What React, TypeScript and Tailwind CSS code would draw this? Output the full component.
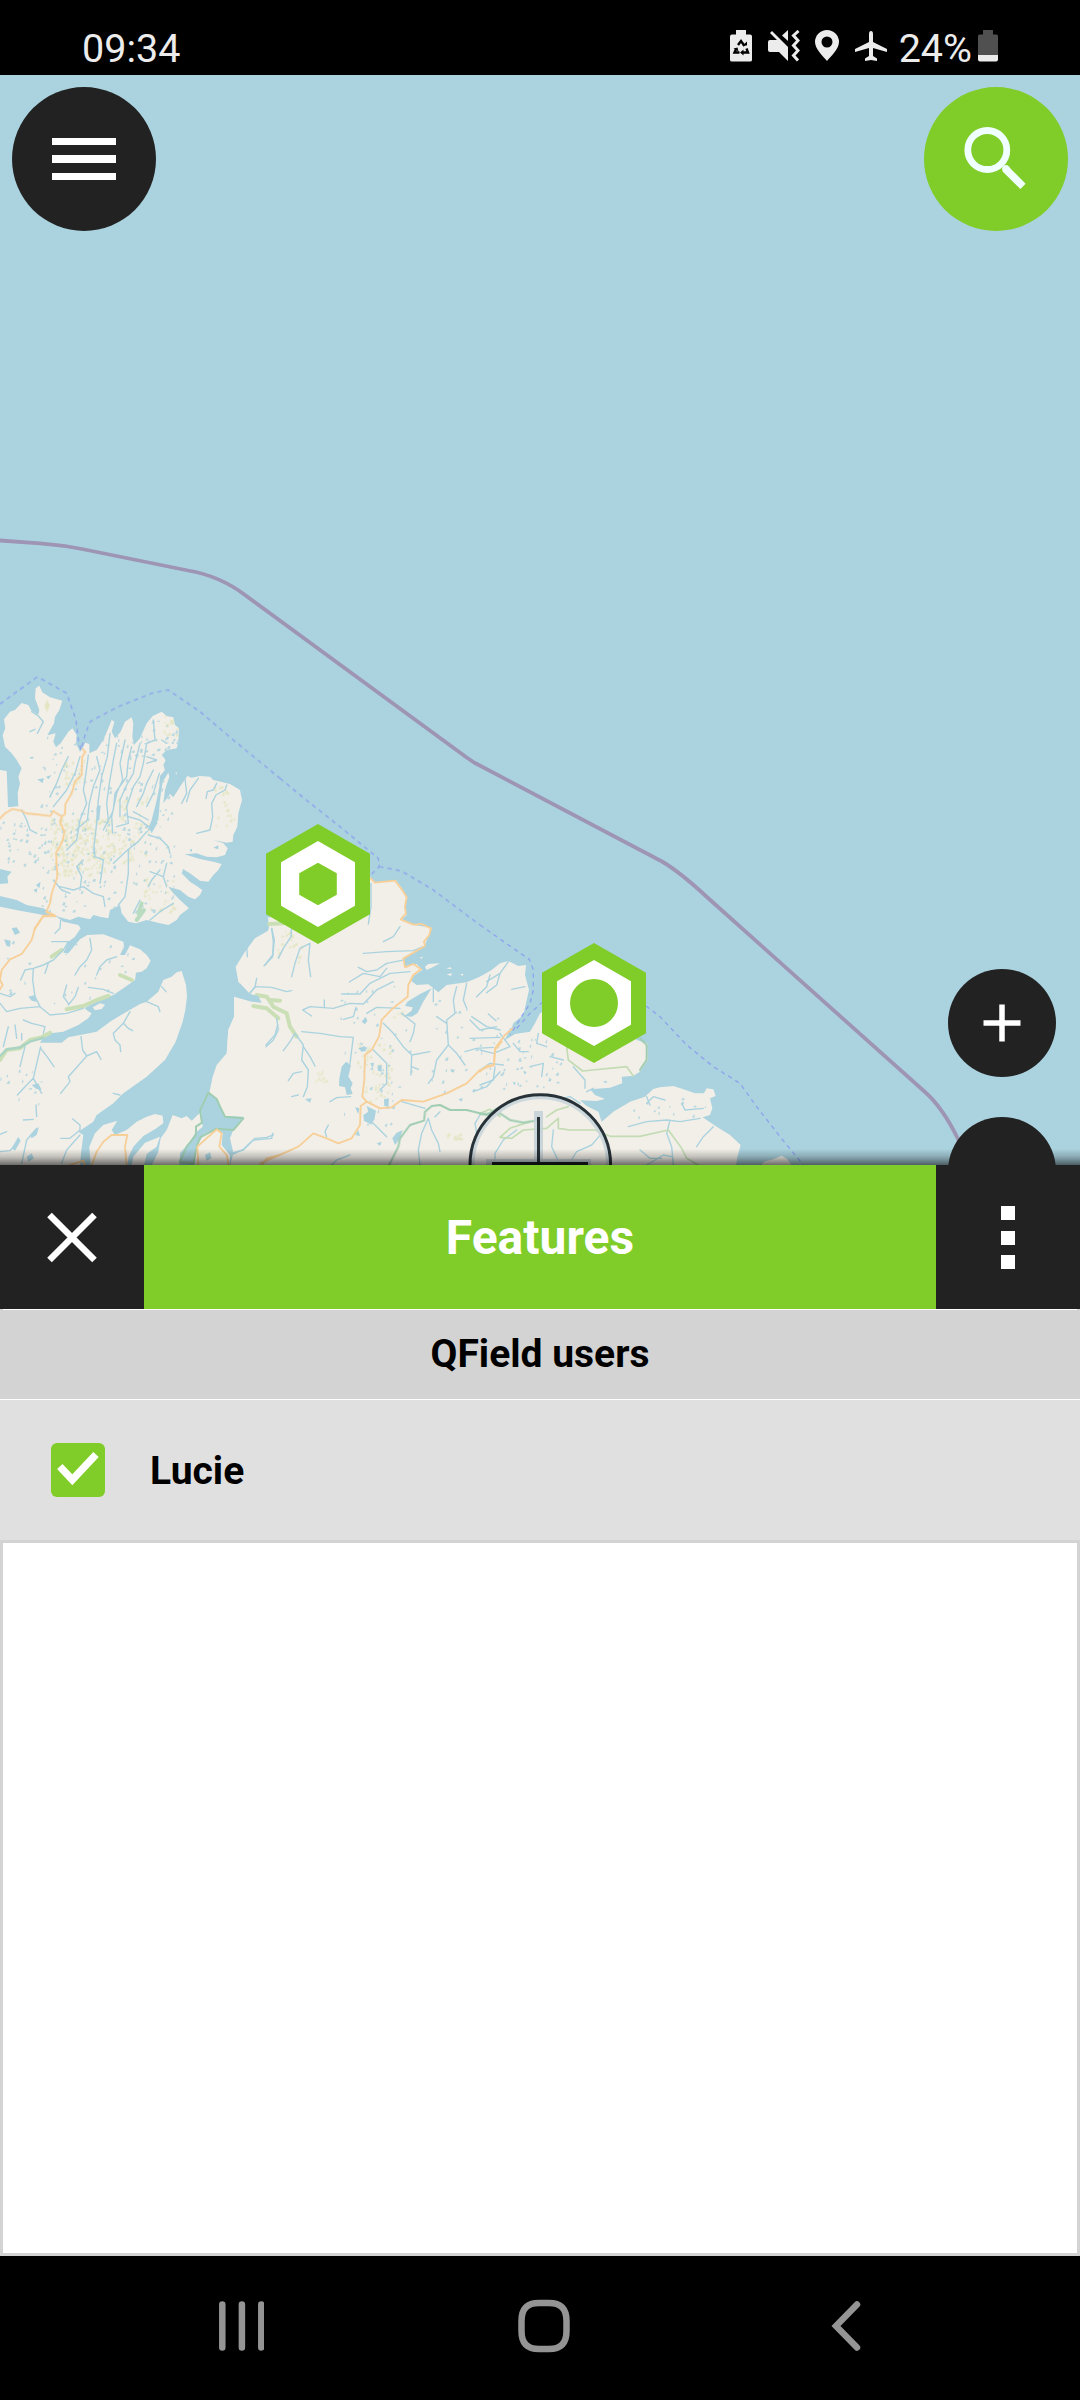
import React from "react";

const LAND = "#f2efe8";
const WATER = "#abd3df";

// Each tile holds a stretch of the coast in its own 3x coordinates.
const TILE_NW = "translate(0 660) scale(.33333)";
const TILE_SW = "translate(0 900) scale(.33333)";
const TILE_MID = "translate(220 800) scale(.33333)";
const TILE_EAST = "translate(480 900) scale(.33333)";

const nwCoast =
  "M0 330L20 333 22 380 24 442 55 440 53 400 60 370 55 350 65 325 50 300 35 280 15 260 8 225 16 205 12 178 30 155 45 150 65 129 85 135 95 153 115 165 118 150 105 115 107 85 118 77 127 97 150 112 187 122 178 150 165 170 162 190 142 226 167 220 160 245 168 262 182 250 205 215 217 205 230 225 228 250 240 276 256 248 268 252 268 280 290 270 310 240 325 205 335 180 343 185 335 215 345 235 362 215 375 185 395 172 400 190 397 230 402 255 420 235 440 190 458 168 485 155 500 168 520 172 525 195 537 205 535 245 530 265 500 270 485 285 497 300 490 315 495 330 480 348 478 380 468 430 455 480 440 520 475 480 480 420 488 365 505 338 508 350 495 390 490 430 510 402 520 412 540 380 562 348 575 353 600 348 630 350 640 360 690 372 720 390 726 420 715 460 712 500 700 525 698 545 680 548 640 540 670 550 683 565 675 585 650 592 620 590 590 580 553 583 600 597 640 605 665 612 655 630 640 645 625 665 600 662 570 640 550 628 545 640 570 665 590 678 607 690 600 705 585 718 565 710 540 690 505 680 520 700 540 720 567 745 540 765 530 780 505 795 480 790 440 780 408 790 385 785 365 760 360 735 350 740 330 750 325 775 300 770 280 765 270 778 235 770 210 780 175 770 165 765 130 745 80 735 50 720 0 708V672L25 670 22 650 35 635 0 627Z";

const swCoast =
  "M0 20L60 32 130 45 170 50 190 65 235 75 242 85 225 110 205 125 190 158 205 160 240 118 262 105 310 103 370 125 372 140 360 165 375 165 390 136 420 148 440 165 452 182 440 205 425 215 408 218 405 240 370 265 340 285 300 300 260 320 262 332 275 340 265 355 235 375 190 395 150 400 128 415 120 428 185 428 205 412 240 405 290 395 330 365 380 335 420 312 440 305 475 275 490 240 515 230 530 217 545 213 558 255 561 290 556 330 548 365 527 425 495 480 440 530 370 580 340 610 290 645 280 665 235 695 250 705 243 760 240 797H0Z";

const swIslands = [
  "M278 322L300 310 315 314 305 327 285 331Z",
  "M272 797L268 740 285 700 310 675 352 662 335 690 345 705 380 690 410 665 440 650 465 642 488 647 490 670 465 688 430 708 400 740 386 770 382 797Z",
  "M395 797L400 770 435 728 480 710 470 740 440 762 432 797Z",
  "M455 797L475 755 482 715 500 690 518 645 545 655 560 648 575 662 603 635 608 680 585 700 570 725 540 760 538 797Z",
  "M840 75L803 50 808 72 805 92 770 120 740 150 735 175 710 200 715 235 740 270 760 285 790 298 830 340H860V75Z",
  "M702 290L720 296 752 312 840 340 870 797H690L700 760 697 745 690 715 700 690 730 650 675 648 665 625 650 595 628 578 638 530 650 495 680 460 685 390 703 350Z",
  "M583 797L590 740 612 702 650 686 668 700 665 735 690 765 690 797Z",
];

const midCoast =
  "M150 350L145 365 148 390 105 415 75 455 47 500 55 545 80 575 95 585 42 590 42 650 25 690 20 765 0 790 70 840 180 900V1100H840V495L800 522 740 547 680 555 655 577 635 560 625 553 590 555 570 540 580 528 607 510 590 492 555 499 552 475 600 448 612 440 625 410 635 383 582 375 545 358 560 345 553 320 560 290 545 265 528 240 465 248 452 232 400 250 250 300Z";

const eastCoast =
  "M-20 240L0 230 35 210 60 190 85 183 115 198 138 195 135 225 147 270 138 310 130 345 100 370 90 400 72 422 105 402 150 395 165 370 180 340 250 300H340L470 420 502 430 504 480 480 515 460 527 425 530 427 550 390 563 330 568 345 585 375 597 350 603 300 601 320 618 355 635 365 665 400 635 450 605 495 590 520 567 540 562 580 558 610 568 645 580 672 580 680 565 700 568 707 588 690 595 697 625 690 645 668 652 710 680 750 705 782 735 772 770 768 797H-20Z";

// Inland water that is wide enough to read as an area.
const lakes: [string, string[]][] = [
  [TILE_SW, [
    "M35 85L50 82 60 98 45 105Z", "M12 118L32 122 30 140 20 138Z", "M85 290L105 285 110 305 95 302Z", "M95 555L115 550 125 570 108 566Z",
    "M258 320L275 325 270 332 255 328Z", "M90 705L117 680 110 705 95 715Z", "M35 745L55 710 62 722 45 752Z", "M80 770L95 760 102 775 85 785Z",
    "M615 765L630 757 635 775 620 782Z", "M565 777L585 725 582 760 572 785Z",
  ]],
  [TILE_MID, [
    "M365 800L378 785 393 795 385 830 398 850 392 865 398 882 380 885 375 862 357 858 358 835Z", "M425 665L437 650 442 662 435 673Z",
    "M430 945L445 935 440 918 468 932 463 960 450 972 432 962Z", "M492 898L507 895 505 920 493 918Z", "M405 922L418 925 415 942Z",
    "M517 1015L530 998 548 990 540 1015 525 1035Z", "M555 618L562 605 600 582 635 565 610 605 592 640 575 650 553 648 575 632 578 622Z",
    "M472 797L485 795 485 815 474 812Z", "M406 1005L415 990 420 1008Z", "M415 745L435 738 438 752 425 755Z", "M690 812L705 808 700 818Z",
    "M470 1030L485 1025 480 1038Z", "M715 897L728 895 725 905Z", "M255 897L275 895 270 908Z", "M451 790L462 788 458 805Z",
  ]],
  [TILE_NW, [
    "M100 690L112 685 110 698ZM108 675L122 665 118 685Z", "M112 358L132 355 128 370Z", "M138 350L155 345 145 358Z", "M445 500L468 470 472 490 455 520Z",
    "M88 292L102 290 96 298Z", "M290 440L302 435 298 480 290 485Z", "M640 563L655 556 655 568Z", "M568 570L576 566 576 576Z",
  ]],
  [TILE_EAST, ["M368 545L380 542 380 550Z", "M75 420L100 395 110 378 90 385Z", "M205 540L215 537 210 546Z", "M130 512L140 516 134 524Z", "M98 545L108 548 103 556Z"]],
];

const rivers: [string, string][] = [
  [TILE_NW,
    "M95 155L115 168 130 185 112 220M90 215L105 208M205 290L185 330 170 370 150 410M240 290L225 340 200 390 160 440M265 285L258 340 250 390 260 430 240 480 230 540 200 570M290 290L300 330 280 380 268 430 262 480 228 510M330 220L322 290 305 350 295 420 290 490 282 560 285 590M350 250L340 300 328 370 320 430 325 480 310 510M375 240L360 310 368 360 350 400 335 470 338 520M395 260L385 300 380 350 345 400 340 450 322 490M420 250L405 310 400 340 380 375 360 420 360 470M460 180L465 240 440 250 430 310 420 350 400 380 380 440 385 490 350 500M485 240L500 250M440 290L470 300 440 310M460 330L440 370 430 400 410 440M478 340L460 400 440 440M440 515L415 545 385 568 385 640 375 710 355 735M385 568L340 610M445 525L480 535 505 560 510 580M385 470L420 480 445 500M400 455L445 480M555 355L560 400 545 430M595 355L570 390 560 425M680 375L675 390 648 405 635 430 638 470 630 510 590 520M650 370L640 390 622 395 618 415M500 610L490 650 450 635M490 650L500 680M480 630L455 660 445 680M550 630L565 650M285 590L310 600 305 640 300 670M180 680L220 690 250 680 280 700 310 710 315 740M250 600L230 620 245 650 240 690M160 660L185 690 210 700M65 450L80 480 90 510 110 520M520 730L480 755 450 780M400 760L420 720"],
  [TILE_SW,
    "M182 60L180 85 165 100M155 125H205L190 150 160 180 130 195 100 205 75 210 62 240M100 205L98 240 105 290 120 320M145 190L135 220M270 115L275 150 260 180 240 200 225 225M350 170L320 180 300 200 290 225M0 280L30 290 45 280M0 310L20 335 60 325 120 320 150 345 200 340 250 325M200 255L190 290 205 310M235 262L225 290 205 315M265 262L310 268 340 280M25 380L15 420 10 440M45 375L50 415M70 360L95 370 135 380 130 400M65 400V420M75 440L60 500M122 440L108 500 100 535 75 560 52 585M122 445L145 475 162 500M100 535L125 580M243 410L248 450 260 468 245 485 205 530 210 545 182 580M260 468L290 455 303 478M390 335L370 370 340 400 345 420 360 435 362 455M370 370L385 385 398 392M440 305L475 320 480 335M485 260L498 275M340 580L360 585M218 657L240 675V690L210 715H182M108 615L110 650M70 660L100 658M0 703L20 695M0 755L30 752 45 735M110 685L80 720 65 790M240 705L200 750 185 790M815 85L823 120 818 170 792 197M770 235L765 262 750 278M833 375L825 405 798 435M700 762L730 748 765 715 800 712 820 705"],
  [TILE_MID,
    "M155 385L160 425 158 465 135 495M215 380L213 410 190 445 175 475M270 430L240 445 225 490 215 530M270 430L265 480 272 530M80 440L82 470M90 580L105 560 155 562 200 575 215 572M453 250V320L445 372M540 380L520 410 490 425M430 460L500 455 580 452 610 440M415 502L440 515 470 510 500 490 560 478M388 546L430 520 480 530 500 505M365 582H420L450 550 510 520 570 515M248 630L270 620 340 625 390 610 430 612 470 570 520 545M248 630L275 648M313 600V622M408 622L400 650 370 658M440 640L470 622 540 625M245 695L300 700 360 710 400 712 395 750 390 790M170 655L175 690 160 720 138 740M225 700L210 725 190 752M225 700L250 735 245 780 265 810 262 860 250 890M250 740L270 770 285 798M245 815L220 820 205 842M490 670L520 700 550 740 575 765 573 825M575 765L630 755M575 800L595 808M545 640L585 672 580 700 570 725M460 750L490 780 500 790V850L480 870M330 905L350 893 392 890M215 890L235 885M455 965L480 990 500 1010M545 905L615 925M660 935L645 950M40 1058L70 1050 100 1020 155 1015 158 1000M325 975L315 995 320 1010M390 1065L350 1080 335 1095M625 955L635 990 655 1030 660 1055M625 955L605 1000 595 1050 600 1095M640 565V605M710 560L700 600 705 640 680 660 685 735 650 780 640 830 625 850M740 550L730 600 740 625M810 525L800 560 770 590M755 650L800 680 840 690M685 735L710 760 735 795M750 715L840 712M735 755L770 745 820 742M760 875L800 860 840 815M780 945L765 970 770 1000M650 650L680 670M750 660L780 690 830 680"],
  [TILE_EAST,
    "M85 185L60 220 50 255 20 278M60 220L20 245M135 260L95 268M25 342L48 362M0 450L40 460 90 440 60 400M45 500L40 540 0 555M100 430L120 455H145M175 400L170 430 200 440M250 480L210 470M280 500L315 540V565M340 565L320 575M45 795V760L70 720 110 690M220 690L215 740 240 795M365 700L335 735 290 755 265 795M445 680L500 665 560 660 600 665 660 655M570 660L560 700 575 740 580 795M555 600L520 590 500 610M605 610L615 630 670 625M500 590L510 615M700 680L670 710 650 740M480 750L510 775H545M500 795L550 765 575 770M0 510L30 490 70 495M150 500L190 490 185 530M230 600L270 590 300 610"],
];

const wetlands: [string, string][] = [
  [TILE_SW, "M0 480L20 450 60 445 90 420 125 412 150 398M155 170L185 150M200 328L250 318 290 300 325 288M360 225L395 240"],
  [TILE_MID, "M110 585L140 590 160 620 200 640 210 680 230 710M150 600L180 602M100 618L140 625 175 655M148 372L190 370"],
];

const greens: [string, string][] = [
  [TILE_SW, "M625 578L600 632 606 668 588 680V705L560 740 540 785 580 790 590 740 600 712 650 686 700 690 730 655 675 650 660 620 650 597Z"],
  [TILE_MID, "M505 1100L535 1040 540 1015 570 975 612 962 615 935 635 918 660 915 690 930 740 930 800 945 840 920"],
  [TILE_EAST, "M0 642L60 640 90 660 130 668 180 660M480 415L500 435 500 480 480 510"],
];

const paleGreens: [string, string][] = [
  [TILE_EAST, "M260 440L265 480 308 513 440 500 460 528M235 655L200 685 130 690 95 715 60 712 90 685 150 665M235 655V685L270 690H345L390 709H480L565 690 605 745 620 775 655 795M0 640L30 628 60 650M200 650L230 630 265 620"],
];

const roads: [string, string][] = [
  [TILE_NW, "M248 268L256 275 246 292 245 345 225 365 215 400 196 432 195 462 185 470 160 453 150 468 110 463 78 460 65 452 36 447 15 460 0 475M185 470L180 485 193 515 187 545 168 578 172 650 155 700 150 730 139 755 166 768 130 767 103 808"],
  [TILE_SW, "M139 35L166 48H130L105 85 95 120 65 162 30 178 5 210 0 240 8 255 0 268M205 797L250 782 255 797M275 797L290 755 310 725 335 705 382 705 375 740 380 797M595 797L592 740 650 688 665 700 658 740 680 765 687 797M785 797L800 775 840 765"],
  [TILE_MID, "M452 235L465 248 525 242 545 268 560 292 555 320 558 340 542 358 580 374 605 372 633 385 628 405 612 425 615 438 550 475 555 502 580 492 603 508 580 525 565 555 563 590 515 628 485 660 477 710 455 750 435 765 433 840 427 890 440 905 422 918 420 975 395 1015 355 1030 320 1015 280 1000 235 1040 190 1060 120 1090M440 905L480 925 515 922 545 900 610 905 680 880 740 850 780 810 822 795 825 750 845 725"],
  [TILE_EAST, "M98 385L75 405 45 445 42 495 20 498 0 515"],
];

const ferries: [string, string][] = [
  [TILE_NW, "M0 132L50 95 110 52 130 60 200 100 228 180 235 240 243 270 255 225 270 185 350 142 460 98 505 90 600 155 700 240 840 355"],
  [TILE_MID, "M180 -65L265 5 360 80 475 175 478 200 455 222M478 200L545 213 590 240 640 270 780 375"],
  [TILE_EAST, "M0 75L90 138 148 178 160 210V270L150 310 90 405M110 385L150 340 195 300M498 318L540 350 620 435 700 500 780 550 830 620 900 710 970 795"],
];

function Tiles({ items }: { items: [string, string][] }) {
  return <>{items.map(([t, d], i) => <path key={i} transform={t} d={d} />)}</>;
}

// Tiny ponds and scrub patches, laid out with a fixed pseudo-random sequence.
function makeSpecks(seed: number, n: number, x: number, y: number, w: number, h: number) {
  let s = seed;
  const next = () => {
    s = (s * 16807) % 2147483647;
    return s / 2147483647;
  };
  let d = "";
  for (let i = 0; i < n; i++) {
    const px = x + next() * w;
    const py = y + next() * h;
    const a = 3 + next() * 7;
    const b = 2 + next() * 4;
    d += `M${px.toFixed(1)} ${py.toFixed(1)}l${b.toFixed(1)} ${(-a).toFixed(1)} ${b.toFixed(1)} 2 ${(-b / 2).toFixed(1)} ${a.toFixed(1)}z`;
  }
  return d;
}

const nwPonds = makeSpecks(41, 240, 120, 230, 400, 540) + makeSpecks(9, 45, 0, 480, 160, 150) + makeSpecks(77, 25, 420, 170, 110, 120);
const nwScrub = makeSpecks(5, 230, 150, 480, 180, 170) + makeSpecks(13, 60, 330, 400, 110, 220) + makeSpecks(17, 30, 190, 300, 60, 80) + makeSpecks(19, 30, 430, 660, 90, 100) + makeSpecks(23, 20, 640, 380, 60, 150) + makeSpecks(29, 14, 490, 170, 40, 60);
const swPonds = makeSpecks(101, 24, 20, 120, 380, 200) + makeSpecks(33, 12, 0, 500, 130, 120);
const midPonds = makeSpecks(55, 45, 360, 560, 160, 420) + makeSpecks(61, 35, 510, 600, 330, 280);
const midScrub = makeSpecks(71, 50, 410, 730, 100, 180) + makeSpecks(73, 16, 170, 390, 70, 100) + makeSpecks(75, 12, 520, 620, 60, 40) + makeSpecks(79, 14, 680, 1000, 40, 25) + makeSpecks(83, 10, 285, 820, 30, 30);
const eastPonds = makeSpecks(91, 40, 0, 420, 240, 150) + makeSpecks(93, 14, 430, 600, 250, 60);

const hex = (cx: number, cy: number, rx: number, ry: number) =>
  [[0, -1], [1, -0.505], [1, 0.505], [0, 1], [-1, 0.505], [-1, -0.505]].map(([x, y]) => `${cx + x * rx},${cy + y * ry}`).join(" ");

function MapCanvas() {
  return (
    <svg className="block h-full w-full" viewBox="0 75 1080 1090" fill="none" strokeLinejoin="round" strokeLinecap="round">
      <defs>
        <clipPath id="nw"><path d={nwCoast} /></clipPath>
        <clipPath id="sw"><path d={swCoast} /></clipPath>
        <clipPath id="mid"><path d={midCoast} /></clipPath>
        <clipPath id="east"><path d={eastCoast} /></clipPath>
      </defs>
      <g fill={LAND}>
        <path transform={TILE_NW} d={nwCoast} />
        <path transform={TILE_NW} d="M0 430L24 442 60 438 80 460V480H0ZM527 334l4 6-3 4z" />
        <path transform={TILE_SW} d={swCoast} />
        {swIslands.map((d) => <path key={d} transform={TILE_SW} d={d} />)}
        <path transform={TILE_MID} d={midCoast} />
        <path transform={TILE_MID} d="M615 500L625 492 660 490 645 498 620 510ZM678 505L692 502 695 508ZM680 523L697 520 692 528ZM720 523L730 521 728 528ZM598 473L610 470 605 476Z" />
        <path transform={TILE_EAST} d={eastCoast} />
        <path transform={TILE_EAST} d="M843 797L852 785 880 778 905 767 922 778 936 797Z" />
      </g>
      <g fill="#dfe3b8" opacity=".8">
        <g transform={TILE_NW}><g clipPath="url(#nw)"><path d={nwScrub} /><path d="M141 118l8 18-8 20-7-16z" /></g></g>
        <g transform={TILE_MID}><g clipPath="url(#mid)"><path d={midScrub} /></g></g>
      </g>
      <g stroke="#cbdfb6" strokeWidth="12"><Tiles items={wetlands} /></g>
      <path transform={TILE_SW} d="M415 40L425 10M410 60L432 30" stroke="#b9dcc0" strokeWidth="12" />
      <g fill={WATER}>
        <g transform={TILE_NW}><g clipPath="url(#nw)"><path d={nwPonds} opacity=".8" /></g></g>
        <g transform={TILE_SW}><g clipPath="url(#sw)"><path d={swPonds} opacity=".8" /></g></g>
        <g transform={TILE_MID}><g clipPath="url(#mid)"><path d={midPonds} opacity=".8" /></g></g>
        <g transform={TILE_EAST}><g clipPath="url(#east)"><path d={eastPonds} opacity=".8" /></g></g>
        {lakes.map(([t, ds]) => ds.map((d) => <path key={t + d} transform={t} d={d} />))}
        <path transform={TILE_MID} d="M60 550L90 582 115 588 125 608 95 605 42 590Z" />
      </g>
      <g stroke={WATER} strokeWidth="4.2"><Tiles items={rivers} /></g>
      <path transform={TILE_SW} d="M0 468L20 448 60 442 90 425 130 414" stroke="#a9d3c4" strokeWidth="7" />
      <g stroke="#c3dcb4" strokeWidth="5"><Tiles items={paleGreens} /></g>
      <g stroke="#9fcdb2" strokeWidth="6"><Tiles items={greens} /></g>
      <g stroke="#f7cf98" strokeWidth="5.5"><Tiles items={roads} /></g>
      <g stroke="#8fa5ec" strokeWidth="4.2" strokeDasharray="13 12" strokeLinecap="butt"><Tiles items={ferries} /></g>
      <path d="M0 540.5L40 543.3Q62 545 82 549L188 570.5Q220 576 245 595L466 757 474 762.500 662 861.500Q680 872 708 898L925 1092Q943 1108 958 1139L970 1165" stroke="#9e95b4" strokeWidth="3.8" />

      <polygon points={hex(318, 884, 52, 60)} fill="#80cc28" />
      <polygon points={hex(318, 884, 37, 43)} fill="#fff" />
      <polygon points={hex(318, 884, 18.8, 21.2)} fill="#80cc28" />
      <polygon points={hex(594, 1003, 52, 60)} fill="#80cc28" />
      <polygon points={hex(594, 1003, 37, 43)} fill="#fff" />
      <circle cx="594" cy="1003" r="24" fill="#80cc28" />

      <g strokeLinecap="butt">
        <circle cx="540.3" cy="1165" r="67.5" stroke="#c9d5dc" strokeWidth="3.5" opacity=".9" />
        <circle cx="540.3" cy="1165" r="70.3" stroke="#263238" strokeWidth="3" />
        <path d="M534 1111h9v48h48v6H486v-6h48z" fill="#c3d0d7" opacity=".85" />
        <path d="M538.5 1117v48" stroke="#263238" strokeWidth="3" />
        <path d="M492 1163.5h96" stroke="#182026" strokeWidth="3" />
      </g>
    </svg>
  );
}

function StatusBar() {
  return (
    <header className="flex h-[75px] shrink-0 items-end justify-between bg-black pr-[82px] pl-[82px] text-[39.5px] leading-[47px] text-[#ececec]">
      <span className="mb-[3px]">09:34</span>
      <div className="mb-[3px] flex">
        <svg className="mt-[5px] h-8 w-[22px]" viewBox="0 0 22 32">
          <path d="M6 0h10v4.500h4q2 0 2 2V30q0 1.500-2 1.500H2Q0 31.500 0 30V6.500q0-2 2-2h4z" fill="#ececec" />
          <g fill="none" stroke="#000" strokeWidth="2.400">
            <path d="M8 15L11 11l3.500 5M16.500 18.500l1.500 4H12.500M9.500 22.500H4.500l1.800-4" />
          </g>
          <path d="M12.500 15.500h4.500V11.500zM3.500 18.500l4-1 1 4zM13.500 19.500v6l-3.500-3z" fill="#000" />
        </svg>
        <svg className="mt-[5px] ml-4 h-8 w-[32px]" viewBox="0 0 32 32" fill="#ececec">
          <path d="M2 10h7l-7-7 2-2 16 16v14l-9-9H2Q0 22 0 20v-8q0-2 2-2zM20 0v11l-6-5.500z" />
          <path d="M30.500 1l-5 4.500 4.500 5-4.500 5 4.500 5-4.500 5 4.500 5" fill="none" stroke="#ececec" strokeWidth="3" />
        </svg>
        <svg className="mt-[5px] ml-[15px] h-[31px] w-6" viewBox="0 0 24 31" fill="#ececec">
          <path fillRule="evenodd" d="M12 0a12 12 0 0 1 12 12c0 7-8 14-12 19C8 26 0 19 0 12A12 12 0 0 1 12 0zm0 6.500a5.500 5.500 0 1 0 0 11 5.500 5.500 0 0 0 0-11z" />
        </svg>
        <svg className="mt-[6px] ml-4 h-[30px] w-8" viewBox="0 0 32 30" fill="#ececec">
          <path d="M16 0q2 0 2 3v8l14 7v3l-14-4v8l4 2.500V30l-6-1-6 1v-2.500l4-2.500v-8L0 21v-3l14-7V3q0-3 2-3z" />
        </svg>
        <span className="ml-[12px]">24%</span>
        <svg className="mt-[5px] ml-[6px] h-8 w-[20px]" viewBox="0 0 20 32">
          <path d="M5 0h10v4.500h3.500q1.500 0 1.500 1.500v19H0V6q0-1.500 1.500-1.500H5z" fill="#505050" />
          <path d="M0 25h20v4.500q0 2-2 2H2q-2 0-2-2z" fill="#ececec" />
        </svg>
      </div>
    </header>
  );
}

export default function App() {
  return (
    <div className="flex h-[2400px] w-[1080px] flex-col overflow-hidden bg-white font-['Roboto',sans-serif]">
      <StatusBar />

      <main className="relative h-[1090px] shrink-0 overflow-hidden bg-[#abd3df]">
        <MapCanvas />
        <div className="absolute inset-x-0 bottom-0 h-4 bg-linear-to-t from-black/55 via-black/20 to-transparent" />
        <button className="absolute top-3 left-3 flex size-36 flex-col items-center justify-center gap-[10px] rounded-full bg-[#222]">
          <span className="h-[7.5px] w-16 bg-white" />
          <span className="h-[7.5px] w-16 bg-white" />
          <span className="h-[7.5px] w-16 bg-white" />
        </button>
        <button className="absolute top-3 right-3 size-36 rounded-full bg-[#80cc28]">
          <svg viewBox="0 0 144 144" className="size-36" fill="none" stroke="#f0ffff">
            <circle cx="63.300" cy="63" r="19.500" strokeWidth="6.800" />
            <path d="M81 81.500L99 99.300" strokeWidth="7.500" />
            <path d="M82.500 82.500l-.5-.5" strokeWidth="7.500" strokeLinecap="round" />
          </svg>
        </button>
        <button className="absolute top-[894px] right-6 size-[108px] rounded-full bg-[#222]">
          <svg viewBox="0 0 108 108" className="size-[108px]" stroke="#fff" strokeWidth="5.500">
            <path d="M54 35.500v37M35.500 54h37" />
          </svg>
        </button>
        <button className="absolute top-[1042px] right-6 size-[108px] rounded-full bg-[#222]" />
      </main>

      <section className="flex h-[1091px] shrink-0 flex-col">
        <div className="flex h-36 shrink-0 items-stretch">
          <button className="w-36 bg-[#222]">
            <svg viewBox="0 0 144 144" className="size-36" stroke="#fff" strokeWidth="6.500">
              <path d="M49.500 50L94.500 95M94.500 50L49.500 95" />
            </svg>
          </button>
          <h1 className="flex flex-1 items-center justify-center bg-[#80cc28] pt-[2px] text-[48px] font-bold text-white">Features</h1>
          <button className="flex w-36 flex-col items-center justify-center gap-[10.5px] bg-[#222] pt-px">
            <span className="size-[14px] bg-white" />
            <span className="size-[14px] bg-white" />
            <span className="size-[14px] bg-white" />
          </button>
        </div>
        <div className="flex min-h-0 flex-1 flex-col border-x-[3px] border-b-[3px] border-[#d3d3d3] bg-white pt-px">
          <h2 className="-mx-[3px] flex h-[89px] shrink-0 items-center justify-center bg-[#d3d3d3] pb-px text-[39px] font-bold text-black">QField users</h2>
          <div className="-mx-[3px] h-px shrink-0 bg-white" />
          <div className="-mx-[3px] flex h-[143px] shrink-0 items-center border-b-[3px] border-[#d3d3d3] bg-[#e0e0e0] pl-[51px]">
            <span className="flex size-[54px] items-center justify-center rounded-[6px] bg-[#80cc28]">
              <svg viewBox="0 0 54 54" className="size-[54px]" fill="none" stroke="#fff" strokeWidth="7.500">
                <path d="M8.800 23.500L21.300 36.800L45 11.500" />
              </svg>
            </span>
            <span className="ml-[45px] pt-[2px] text-[39px] font-bold text-black">Lucie</span>
          </div>
        </div>
      </section>

      <nav className="flex h-[144px] items-center bg-black px-[218px] pb-[4px]">
        <svg viewBox="0 0 46 54" className="h-[54px] w-[46px]" stroke="#949494" strokeWidth="6.500" strokeLinecap="round">
          <path d="M4.300 5.500v43M23.900 5.500v43M43.300 5.500v43" />
        </svg>
        <svg viewBox="0 0 54 54" className="ml-[253px] h-[54px] w-[54px]" fill="none" stroke="#949494" strokeWidth="6.500">
          <path d="M22 4H32C44 4 49.500 10 49.500 22V32C49.500 44 44 50 32 50H22C10 50 4.500 44 4.500 32V22C4.500 10 10 4 22 4Z" />
        </svg>
        <svg viewBox="0 0 32 54" className="ml-[259px] h-[54px] w-8" fill="none" stroke="#949494" strokeWidth="6.500" strokeLinecap="round">
          <path d="M27 5.500L6 27L27 48.500" />
        </svg>
      </nav>
    </div>
  );
}
